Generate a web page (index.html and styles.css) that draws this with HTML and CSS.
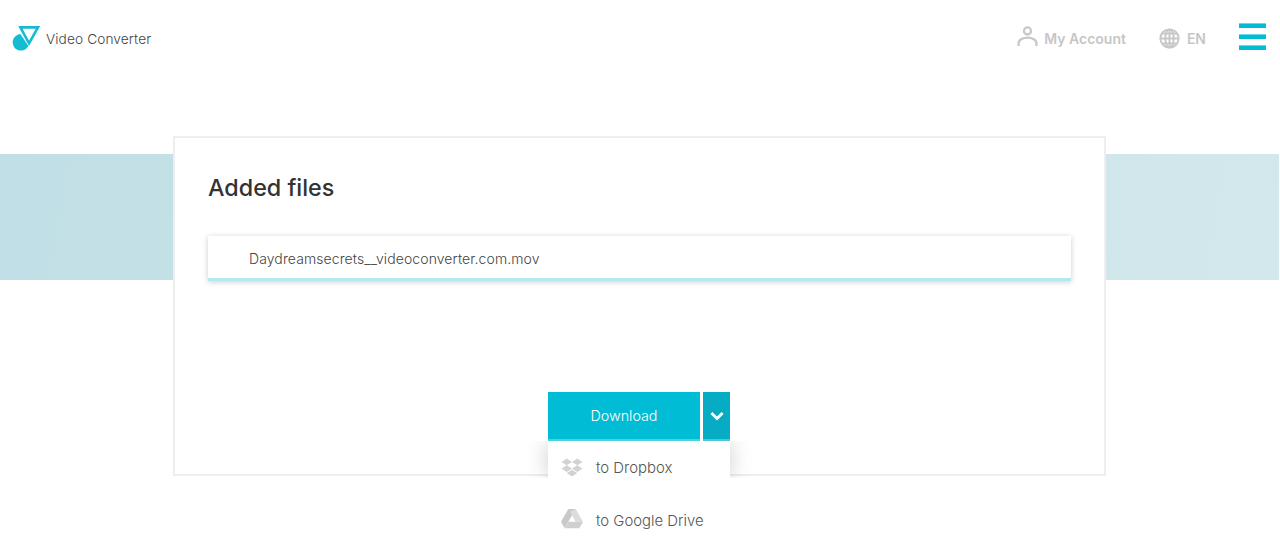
FILE: index.html
```html
<!DOCTYPE html>
<html lang="en">
<head>
<meta charset="utf-8">
<title>Video Converter</title>
<link rel="stylesheet" href="styles.css">
</head>
<body>
<div class="page">
  <header class="header">
    <a class="brand">
      <svg class="brand-logo" viewBox="0 0 26 24" aria-hidden="true">
        <path class="logo-tri" d="M6.4 1.4H24L15 17.4Z"/>
        <path class="logo-drop" d="M6.4 8 14.4 20A8.3 8.3 0 1 1 6.4 8Z"/>
      </svg>
      <span class="brand-name">Video Converter</span>
    </a>
    <nav class="nav">
      <a class="nav-item account">
        <svg class="icon-user" viewBox="0 0 22 22" aria-hidden="true">
          <circle cx="11" cy="5.2" r="3.7"/>
          <path d="M1.6 21V18.5C1.6 14.6 5.8 12.2 11 12.2S20.4 14.6 20.4 18.5V21"/>
        </svg>
        <span>My Account</span>
      </a>
      <a class="nav-item lang">
        <svg class="icon-globe" viewBox="0 0 22 22" aria-hidden="true">
          <circle cx="11" cy="11" r="9.6"/>
          <ellipse cx="11" cy="11" rx="4.4" ry="9.6"/>
          <path d="M11 1.4V20.6M1.4 11H20.6M3 5.8H19M3 16.2H19"/>
        </svg>
        <span>EN</span>
      </a>
      <button class="burger" aria-label="Menu"><span></span><span></span><span></span></button>
    </nav>
  </header>
  <main class="main">
    <section class="card">
      <h1 class="title">Added files</h1>
      <div class="file-row">Daydreamsecrets__videoconverter.com.mov</div>
      <div class="actions">
        <button class="btn-download">Download</button>
        <button class="btn-toggle" aria-label="More">
          <svg viewBox="0 0 14 10" aria-hidden="true"><path d="M1.4 2 7 7.6 12.6 2"/></svg>
        </button>
        <div class="menu">
          <a class="menu-item">
            <svg class="menu-icon" viewBox="0 0 24 24" aria-hidden="true"><path d="M6 1.807L0 5.629l6 3.822 6.001-3.822L6 1.807zM18 1.807l-6 3.822 6 3.822 6-3.822-6-3.822zM0 13.274l6 3.822 6.001-3.822L6 9.452l-6 3.822zM18 9.452l-6 3.822 6 3.822 6-3.822-6-3.822zM6 18.371l6.001 3.822 6-3.822-6-3.822L6 18.371z"/></svg>
            <span>to Dropbox</span>
          </a>
          <a class="menu-item">
            <svg class="menu-icon drive" viewBox="0 0 24 22" aria-hidden="true">
              <path class="d1" d="M8 0.5H16L8 14.5 4 21.5 0 14.5Z"/>
              <path class="d2" d="M16 0.5 24 14.5H16L10 4Z"/>
              <path class="d3" d="M8 14.5H24L20 21.5H4.4Z"/>
            </svg>
            <span>to Google Drive</span>
          </a>
        </div>
      </div>
    </section>
  </main>
</div>
</body>
</html>
```

FILE: styles.css
```css
* { box-sizing: border-box; }
html, body { margin: 0; height: 547px; overflow: hidden; background: #fff; }
body { font-family: Inter, "Liberation Sans", sans-serif; }
a { color: inherit; text-decoration: none; }
button { font: inherit; border: 0; padding: 0; cursor: pointer; }

.page {
  margin-right: 1px;
  height: 547px;
  background: linear-gradient(100deg, #c1dfe6, #d3e8ec) 0 154px / 100% 126px no-repeat;
}

.header {
  height: 76px;
  display: flex;
  align-items: center;
  justify-content: space-between;
  padding: 0 13px 0 14px;
}
.brand { display: flex; align-items: center; gap: 6px; }
.brand-logo { width: 26px; height: 24px; display: block; overflow: visible; }
.logo-tri { fill: none; stroke: #14bcd2; stroke-width: 2.6; }
.logo-drop { fill: #14bcd2; }
.brand-name { padding-top: 2px; font-size: 13.7px; font-weight: 300; color: #444; letter-spacing: .1px; }

.nav { display: flex; align-items: center; }
.nav-item { display: flex; align-items: center; color: #c6c6c6; font-size: 14px; font-weight: 600; }
.account { gap: 6px; margin-right: 33px; }
.lang { gap: 7px; margin-right: 33px; }
.icon-user { width: 21px; height: 21px; margin-bottom: 4px; fill: none; stroke: #c8c8c8; stroke-width: 2.4; }
.icon-globe { width: 21px; height: 21px; fill: none; stroke: #c8c8c8; stroke-width: 2; }
.burger { width: 27px; margin-bottom: 3px; display: flex; flex-direction: column; gap: 6px; background: none; }
.burger span { display: block; height: 5px; background: #00bcd4; border-top: 1px solid #6fd8e6; }

.main { padding-top: 60px; display: flex; justify-content: center; }
.card {
  width: 933px;
  height: 340px;
  background: #fff;
  border: 2px solid #eeeeee;
  padding: 35px 33px 0;
  display: flex;
  flex-direction: column;
}
.title { margin: 0; font-size: 23.3px; line-height: 30px; font-weight: 500; color: #333; }
.file-row {
  margin-top: 33px;
  height: 45px;
  padding: 2px 0 0 41px;
  display: flex;
  align-items: center;
  background: #fff;
  border-bottom: 3px solid #b4e7ee;
  box-shadow: 0 1px 6px rgba(0, 0, 0, .2);
  font-size: 14px;
  font-weight: 300;
  letter-spacing: .1px;
  color: #444;
}

.actions {
  position: relative;
  align-self: center;
  margin: 111px 0 0 -1px;
  display: flex;
  gap: 3px;
}
.btn-download {
  width: 152px;
  height: 49px;
  background: #00bcd4;
  border-bottom: 2px solid #4fd0e0;
  color: #fff;
  font-size: 14.3px;
  font-weight: 300;
}
.btn-toggle {
  width: 27px;
  height: 49px;
  background: #06acc3;
  border-bottom: 2px solid #4fc6d6;
  display: flex;
  align-items: center;
  justify-content: center;
}
.btn-toggle svg { width: 14px; height: 10px; fill: none; stroke: #fff; stroke-width: 2.8; }

.menu { position: absolute; top: 49px; left: 0; width: 182px; background: #fff; }
.menu::before {
  content: "";
  position: absolute;
  inset: 0 0 auto 0;
  height: 37px;
  background: #fff;
  box-shadow: 0 0 22px rgba(0, 0, 0, .2);
  clip-path: inset(0 -40px 0 -40px);
}
.menu-item {
  position: relative;
  display: flex;
  align-items: center;
  height: 53px;
  padding: 0 0 0 13px;
  gap: 13px;
  font-size: 14.9px;
  font-weight: 300;
  color: #555;
}
.menu-icon { width: 22px; height: 21px; fill: #d2d2d2; }
.drive { margin-bottom: 5px; }
.drive .d1 { fill: #c9c9c9; }
.drive .d2 { fill: #dcdcdc; }
.drive .d3 { fill: #cfcfcf; }
```
